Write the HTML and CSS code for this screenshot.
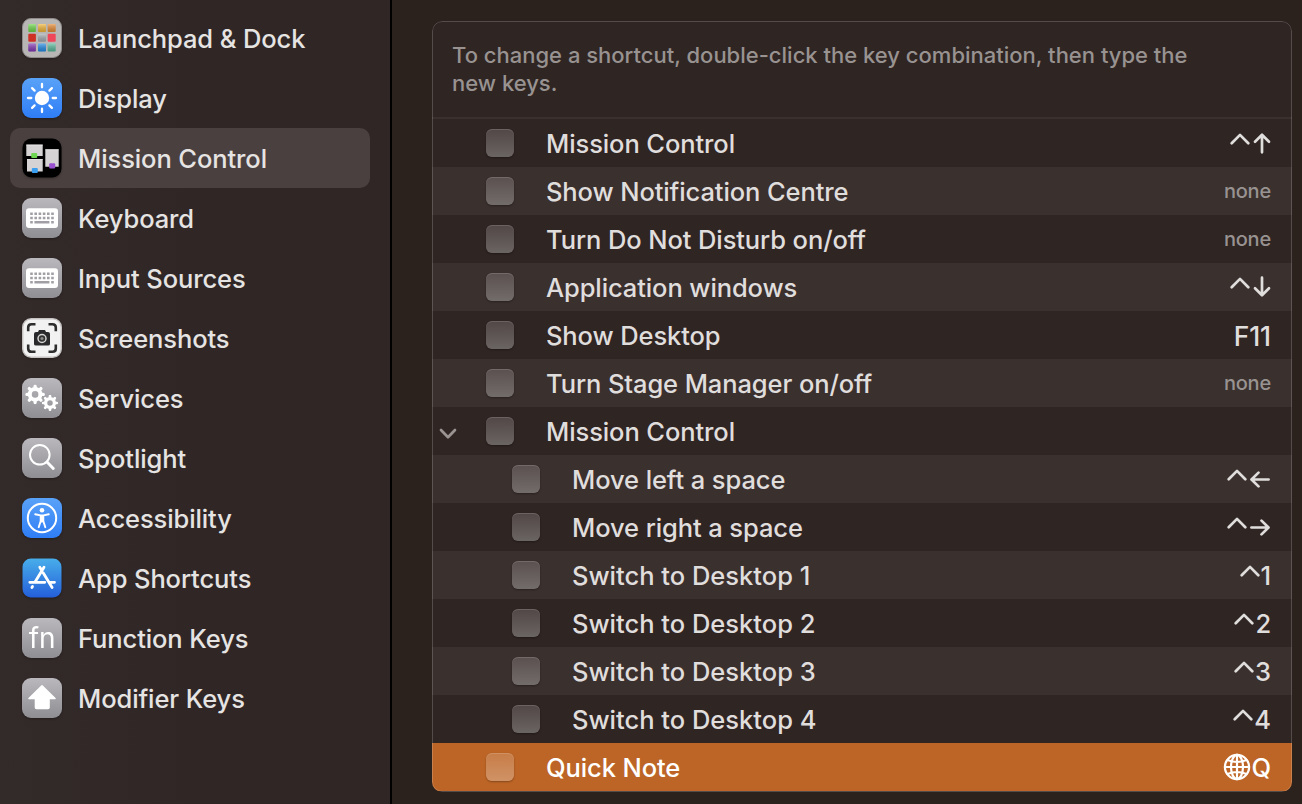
FILE: index.html
```
<!DOCTYPE html>
<html lang="en">
<head>
<meta charset="utf-8">
<title>Keyboard Shortcuts</title>
<link rel="stylesheet" href="styles.css">
</head>
<body>
<svg width="0" height="0" class="defs" aria-hidden="true">
  <defs>
    <linearGradient id="gGray" x1="0" y1="0" x2="0" y2="1"><stop offset="0" stop-color="#bab8bd"/><stop offset="1" stop-color="#8f8e93"/></linearGradient>
    <linearGradient id="gBlue" x1="0" y1="0" x2="0" y2="1"><stop offset="0" stop-color="#59a2f8"/><stop offset="1" stop-color="#2f7df6"/></linearGradient>
    <linearGradient id="gStore" x1="0" y1="0" x2="0" y2="1"><stop offset="0" stop-color="#48aeea"/><stop offset="1" stop-color="#245fda"/></linearGradient>
    <linearGradient id="gShade" x1="0" y1="0" x2="0" y2="1"><stop offset="0" stop-color="#fff" stop-opacity=".35"/><stop offset="1" stop-color="#000" stop-opacity=".18"/></linearGradient>
    <symbol id="caret" viewBox="0 0 20 24"><path d="M1.700 12.200 10 3.900l8.300 8.300"/></symbol>
    <symbol id="arrow-v" viewBox="0 0 18 24"><path d="M9 21.300V4.100M2 10.700 9 3.700l7 7"/></symbol>
    <symbol id="arrow-h" viewBox="0 0 20 24"><path d="M1.600 12.500h17M8.500 5.600 1.500 12.500l7 6.900"/></symbol>
    <symbol id="keys" viewBox="0 0 40 40">
      <rect width="40" height="40" rx="9" fill="url(#gGray)"/>
      <rect x="4" y="10.300" width="32" height="19.700" rx="3" fill="#fff"/>
      <g stroke="#a19fa4" stroke-width="2.600" fill="none"><path d="M8.200 15.700h24" stroke-dasharray="2.600 1.600"/><path d="M8.200 20h24" stroke-dasharray="2.600 1.600"/><path d="M8.200 24.300h2.600M12.400 24.300H27.400M29.200 24.300h2.600"/></g>
    </symbol>
    <symbol id="gear" viewBox="-10 -10 20 20">
      <circle r="5.300" fill="none" stroke="#fff" stroke-width="4"/>
      <g stroke="#fff" stroke-width="3.300" stroke-linecap="round"><path d="M0-8.200V-6M0 8.200V6M-8.200 0H-6M8.200 0H6M-5.800-5.800l1.500 1.500M5.800 5.800 4.300 4.300M-5.800 5.800l1.500-1.500M5.800-5.800 4.300-4.300"/></g>
    </symbol>
  </defs>
</svg>
<div class="window">
  <nav class="sidebar">
    <div class="nav-item">
      <svg class="nav-icon" viewBox="0 0 40 40"><rect x=".5" y=".5" width="39" height="39" rx="8.500" fill="#b8b6b5" stroke="#8f8b8a"/>
        <g><rect x="6.300" y="6" width="7.600" height="8" rx="1" fill="#6ed84b"/><rect x="16" y="6" width="8" height="8" rx="1" fill="#f3b83c"/><rect x="25.700" y="6" width="8" height="8" rx="1" fill="#e88c35"/>
        <rect x="6.300" y="15.800" width="7.600" height="8" rx="1" fill="#cf3026"/><rect x="16" y="15.800" width="8" height="8" rx="1" fill="#a4acb2"/><rect x="25.700" y="15.800" width="8" height="8" rx="1" fill="#f04659"/>
        <rect x="6.300" y="25.500" width="7.600" height="8" rx="1" fill="#8438b5"/><rect x="16" y="25.500" width="8" height="8" rx="1" fill="#258ce5"/><rect x="25.700" y="25.500" width="8" height="8" rx="1" fill="#5bb99b"/></g>
        <g fill="url(#gShade)"><rect x="6.300" y="6" width="7.600" height="8" rx="1"/><rect x="16" y="6" width="8" height="8" rx="1"/><rect x="25.700" y="6" width="8" height="8" rx="1"/><rect x="16" y="15.800" width="8" height="8" rx="1"/><rect x="6.300" y="25.500" width="7.600" height="8" rx="1"/><rect x="16" y="25.500" width="8" height="8" rx="1"/><rect x="25.700" y="25.500" width="8" height="8" rx="1"/></g></svg>
      <span>Launchpad &amp; Dock</span></div>
    <div class="nav-item">
      <svg class="nav-icon" viewBox="0 0 40 40"><rect width="40" height="40" rx="9" fill="url(#gBlue)"/><circle cx="20" cy="20" r="7.200" fill="#fff"/><path d="M20 6v3.300M20 30.700V34M6 20h3.300M30.700 20H34M10.100 10.100l2.500 2.500M27.400 27.400l2.500 2.500M10.100 29.900l2.500-2.500M27.400 12.600l2.500-2.500" stroke="#fff" stroke-width="2.300" stroke-linecap="round"/></svg>
      <span>Display</span></div>
    <div class="nav-item selected">
      <svg class="nav-icon" viewBox="0 0 40 40"><rect x=".5" y=".5" width="39" height="39" rx="9" fill="#000"/><path d="M4.300 6.800h16.400v11.200H4.300zM5 21.300h15.700v12.200H5zM23.300 11.500h13.400v17.200H23.300z" fill="#d5d3d4"/><path d="M4.300 7h16.400M5 21.500h15.700M23.300 11.700h13.400" stroke="#f1eff0" stroke-width=".8"/><rect x="9.200" y="15" width="6" height="5" rx="1" fill="#6fd651"/><rect x="9.800" y="30" width="6" height="5" rx="1" fill="#3b9ff0"/><rect x="27.200" y="25.200" width="6" height="5.200" rx="1" fill="#9a51cf"/></svg>
      <span>Mission Control</span></div>
    <div class="nav-item"><svg class="nav-icon"><use href="#keys"/></svg><span>Keyboard</span></div>
    <div class="nav-item"><svg class="nav-icon"><use href="#keys"/></svg><span>Input Sources</span></div>
    <div class="nav-item">
      <svg class="nav-icon" viewBox="0 0 40 40"><rect x=".7" y=".7" width="38.600" height="38.600" rx="8.500" fill="#f3f2f2" stroke="#c5c2c1" stroke-width="1.400"/><path d="M6.200 13.200V9.500q0-3.300 3.300-3.300h4M26.500 6.200h4q3.300 0 3.300 3.300v3.700M33.800 26.500v4q0 3.300-3.300 3.300h-4M13.500 33.800h-4q-3.300 0-3.300-3.300v-4" fill="none" stroke="#2e2d2e" stroke-width="2.600"/><path d="M14 14h2l1-2h6l1 2h2q2 0 2 2v10q0 1.500-2 1.500H14q-2 0-2-1.500V16q0-2 2-2z" fill="#29282a"/><circle cx="20" cy="20.500" r="4" fill="#333" stroke="#d5d3d2" stroke-width="1.500"/><circle cx="20" cy="20.500" r="1.600" fill="#8b8888"/></svg>
      <span>Screenshots</span></div>
    <div class="nav-item">
      <svg class="nav-icon" viewBox="0 0 40 40"><rect width="40" height="40" rx="9" fill="url(#gGray)"/><use href="#gear" x="3.100" y="6.400" width="20" height="20"/><use href="#gear" x="19.700" y="16.700" width="16.600" height="16.600"/></svg>
      <span>Services</span></div>
    <div class="nav-item">
      <svg class="nav-icon" viewBox="0 0 40 40"><rect width="40" height="40" rx="9" fill="url(#gGray)"/><circle cx="17.800" cy="16.800" r="9.800" fill="none" stroke="#fff" stroke-width="2"/><path d="m25 24 6.300 6.500" stroke="#fff" stroke-width="2.900" stroke-linecap="round"/></svg>
      <span>Spotlight</span></div>
    <div class="nav-item">
      <svg class="nav-icon" viewBox="0 0 40 40"><rect width="40" height="40" rx="9" fill="url(#gBlue)"/><circle cx="20" cy="20" r="14.200" fill="none" stroke="#fff" stroke-width="2"/><circle cx="20" cy="12.300" r="2.300" fill="#fff"/><path d="m13.200 16.200 5.300 1.200h3l5.300-1.200M20 17.500v6M18.700 17.500v5.500l-2 6.200M21.300 17.500v5.500l2 6.200" fill="none" stroke="#fff" stroke-width="1.900" stroke-linecap="round" stroke-linejoin="round"/></svg>
      <span>Accessibility</span></div>
    <div class="nav-item">
      <svg class="nav-icon" viewBox="0 0 40 40"><rect x=".5" y=".5" width="39" height="39" rx="8.500" fill="url(#gStore)"/><g stroke="#fff" stroke-width="2.800" stroke-linecap="round"><path d="m22 9.300-8.800 14.500M17.800 9.300l2 3.200M21.300 15l8.800 14.500M7.800 24.300h15M28.500 24.300h4M10.500 28.500l-.6 1"/></g></svg>
      <span>App Shortcuts</span></div>
    <div class="nav-item"><span class="nav-icon fn">fn</span><span>Function Keys</span></div>
    <div class="nav-item">
      <svg class="nav-icon" viewBox="0 0 40 40"><rect width="40" height="40" rx="9" fill="url(#gGray)"/><path d="M20 7.800 33 20.500h-6v9q0 1-1 1H14.500q-1 0-1-1v-9H7z" fill="#fff" stroke="#fff" stroke-width="1.600" stroke-linejoin="round"/></svg>
      <span>Modifier Keys</span></div>
  </nav>
  <main class="content">
    <section class="panel">
      <p class="hint">To change a shortcut, double-click the key combination, then type the<br>new keys.</p>
      <div class="rows">
        <div class="row"><i class="box"></i><span class="label">Mission Control</span><span class="key"><svg class="caret"><use href="#caret"/></svg><svg class="vert"><use href="#arrow-v"/></svg></span></div>
        <div class="row"><i class="box"></i><span class="label">Show Notification Centre</span><span class="key none">none</span></div>
        <div class="row"><i class="box"></i><span class="label">Turn Do Not Disturb on/off</span><span class="key none">none</span></div>
        <div class="row"><i class="box"></i><span class="label">Application windows</span><span class="key"><svg class="caret"><use href="#caret"/></svg><svg class="vert down"><use href="#arrow-v"/></svg></span></div>
        <div class="row"><i class="box"></i><span class="label">Show Desktop</span><span class="key fkey">F11</span></div>
        <div class="row"><i class="box"></i><span class="label">Turn Stage Manager on/off</span><span class="key none">none</span></div>
        <div class="row group"><svg class="chevron" viewBox="0 0 18 12"><path d="m2 2 7 7.200L16 2"/></svg><i class="box"></i><span class="label">Mission Control</span></div>
        <div class="row child"><i class="box"></i><span class="label">Move left a space</span><span class="key"><svg class="caret"><use href="#caret"/></svg><svg class="horiz"><use href="#arrow-h"/></svg></span></div>
        <div class="row child"><i class="box"></i><span class="label">Move right a space</span><span class="key"><svg class="caret"><use href="#caret"/></svg><svg class="horiz right"><use href="#arrow-h"/></svg></span></div>
        <div class="row child"><i class="box"></i><span class="label desktop">Switch to Desktop 1</span><span class="key"><svg class="caret"><use href="#caret"/></svg>1</span></div>
        <div class="row child"><i class="box"></i><span class="label desktop">Switch to Desktop 2</span><span class="key"><svg class="caret"><use href="#caret"/></svg>2</span></div>
        <div class="row child"><i class="box"></i><span class="label desktop">Switch to Desktop 3</span><span class="key"><svg class="caret"><use href="#caret"/></svg>3</span></div>
        <div class="row child"><i class="box"></i><span class="label desktop">Switch to Desktop 4</span><span class="key"><svg class="caret"><use href="#caret"/></svg>4</span></div>
        <div class="row active"><i class="box"></i><span class="label">Quick Note</span><span class="key"><svg class="globe" viewBox="0 0 28 28"><circle cx="14" cy="14" r="12.100"/><ellipse cx="14" cy="14" rx="6" ry="12.100"/><path d="M14 1.900v24.200M1.900 14h24.200M4.500 7q9.500 4 19 0M4.500 21q9.500-4 19 0"/></svg>Q</span></div>
      </div>
    </section>
  </main>
</div>
</body>
</html>
```
FILE: styles.css
```
* { box-sizing: border-box; }
body {
  margin: 0;
  background: #2b221d;
  color: #e0dedd;
  font: 470 25.5px/48px Inter, "Liberation Sans", sans-serif;
  letter-spacing: -0.1px;
  overflow: hidden;
}
.defs { display: block; }
.window { display: flex; width: 1302px; height: 804px; }
.sidebar {
  width: 392px;
  padding: 8px 20px 0 10px;
  border-right: 2px solid #000;
  background: linear-gradient(90deg, #332b2a, #2f2625 50%);
  color: #e6e4e3;
}
.nav-item {
  display: flex;
  align-items: center;
  gap: 16px;
  height: 60px;
  padding: 0 12px;
  border-radius: 10px;
  line-height: 60px;
  white-space: nowrap;
}
.nav-item > span:last-child { padding-top: 2px; }
.selected { background: #4a403f; }
.nav-icon { flex: none; width: 40px; height: 40px; filter: drop-shadow(0 1px 1px rgba(0,0,0,.3)); }
.fn {
  border-radius: 9px;
  background: linear-gradient(#bab8bd, #8f8e93);
  color: #fff;
  font-size: 28px;
  font-weight: 380;
  line-height: 41px;
  text-align: center;
}
.content { flex: 1; padding: 21px 10px 12px 40px; }
.panel {
  position: relative;
  height: 771px;
  border-radius: 10px;
  overflow: hidden;
  background: #2f2523;
}
/* Outline laid over the rows so their fills run to the edge */
.panel::after {
  content: "";
  position: absolute;
  inset: 0;
  border: 1px solid rgba(255,255,255,.18);
  border-radius: 10px;
  pointer-events: none;
}
.hint {
  height: 98px;
  margin: 0;
  padding: 20px 20px 0;
  border-bottom: 2px solid #3a312f;
  color: #989391;
  font-size: 22px;
  font-weight: 500;
  letter-spacing: 0;
  line-height: 28px;
  white-space: nowrap;
}
.row {
  display: flex;
  align-items: center;
  height: 48px;
  padding: 0 21px 0 54px;
  white-space: nowrap;
}
.row:nth-child(even) { background: #3a302e; }
.row.child { padding-left: 80px; }
.row.group { padding-left: 7px; }
.row.active { background: #bd6526; color: #fff; }
.box {
  width: 28px;
  height: 28px;
  margin-right: 32px;
  border-radius: 6px;
  background: linear-gradient(#514746, #6a6462);
  box-shadow: inset 0 1px 0 rgba(255,255,255,.15), 0 1px 2px rgba(0,0,0,.3);
}
.row:nth-child(even) .box { background: linear-gradient(#5a504f, #726c6a); }
.row.active .box { background: linear-gradient(#c77d48, #d09265); }
.label { flex: 1; padding-top: 2px; }
.desktop { letter-spacing: 0; }
.key { display: flex; align-items: center; padding-top: 2px; }
.fkey { font-size: 26.5px; }
.key.none { color: #989391; font-size: 20px; font-weight: 500; letter-spacing: -0.2px; padding-top: 0; }
.key svg, .chevron { fill: none; stroke: currentColor; stroke-width: 2.7; stroke-linecap: round; stroke-linejoin: round; }
.caret { width: 20px; height: 24px; margin: -2px 1px 0 0; }
.vert { width: 18px; height: 24px; margin: -2px 0 0 2px; }
.down { transform: scaleY(-1); }
.horiz { width: 20px; height: 24px; margin: -2px 1px 0 2px; }
.right { transform: scaleX(-1); }
.chevron { width: 18px; height: 12px; margin: 5px 29px 0 0; color: #999391; }
.key .globe { width: 28px; height: 28px; margin: -2px 1px 0 0; stroke-width: 2.2; }
```
